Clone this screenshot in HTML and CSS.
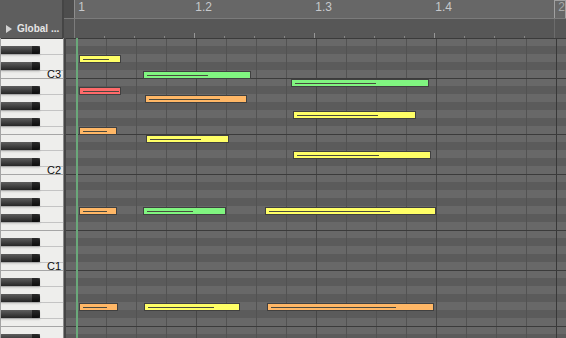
FILE: index.html
```html
<!DOCTYPE html>
<html lang="en">
<head>
    <meta charset="UTF-8">
    <meta name="viewport" content="width=device-width, initial-scale=1.0">
    <title>Piano Roll</title>
    <link rel="stylesheet" href="styles.css">
</head>
<body>
    <div class="editor">
        <div class="header">
            <div class="corner"><span class="tri"></span>Global ...</div>
            <div class="divider"></div>
            <div class="ruler">
                <div class="ruler-top">
                    <div class="pre"></div>
                    <div class="beat first">1</div>
                    <div class="beat">1.2</div>
                    <div class="beat">1.3</div>
                    <div class="beat">1.4</div>
                    <div class="bar-next">2</div>
                </div>
                <div class="ruler-bottom">
                    <div class="pre"></div>
                    <div class="ticks" id="ticks"></div>
                    <div class="bar-next-low"></div>
                </div>
            </div>
        </div>

        <div class="main">
            <div class="keyboard" id="keyboard"></div>
            <div class="divider"></div>
            <div class="roll" id="roll">
                <div class="playhead"></div>
            </div>
        </div>
    </div>

    <script src="script.js"></script>
</body>
</html>
```

FILE: styles.css
```css
* {
    margin: 0;
    padding: 0;
    box-sizing: border-box;
    font-family: 'Liberation Sans', Arial, sans-serif;
}

body {
    background: #5a5a5a;
    overflow: hidden;
}

.editor {
    width: 566px;
    height: 338px;
    display: flex;
    flex-direction: column;
    overflow: hidden;
}

/* header */
.header {
    display: flex;
    height: 38px;
    flex-shrink: 0;
}

.corner {
    width: 64px;
    background: #5e5e5e;
    color: #e6e6e6;
    font-size: 10px;
    font-weight: bold;
    line-height: 12px;
    padding: 20px 0 0 6px;
    display: flex;
    align-items: center;
    align-self: flex-start;
    height: 38px;
    white-space: nowrap;
}

.tri {
    width: 0;
    height: 0;
    border-left: 6px solid #d2d2d2;
    border-top: 4px solid transparent;
    border-bottom: 4px solid transparent;
    margin-right: 5px;
}

.divider {
    width: 2px;
    background: #454545;
    flex-shrink: 0;
}

.ruler {
    flex: 1;
    display: flex;
    flex-direction: column;
}

.ruler-top {
    height: 19px;
    display: flex;
    background: #676767;
    border-bottom: 1px solid #7b7b7b;
}

.ruler-top .pre {
    width: 10px;
    background: #4d4d4d;
}

.beat {
    width: 120px;
    flex-shrink: 0;
    font-size: 12px;
    line-height: 14px;
    color: #c6c9cc;
    padding-left: 1px;
}

.beat.first {
    border-left: 1px solid #8e8e8e;
    padding-left: 3px;
}

.bar-next {
    flex: 1;
    border: 1px solid #a0a0a0;
    border-bottom: none;
    font-size: 12px;
    line-height: 13px;
    color: #a8a8a8;
    padding-left: 3px;
}

.ruler-bottom {
    height: 19px;
    display: flex;
    background: #575757;
}

.ruler-bottom .pre {
    width: 10px;
    background: #555;
}

.ticks {
    display: flex;
    width: 480px;
    flex-shrink: 0;
}

.tick {
    width: 30px;
    height: 100%;
    background: linear-gradient(#858585, #858585) no-repeat left bottom / 1px 2px;
}

.tick.beat-tick {
    background-image: linear-gradient(#979797, #979797);
    background-size: 1px 5px;
}

.tick.bar-tick {
    background-image: linear-gradient(#7c7c7c, #7c7c7c);
    background-size: 1px 100%;
}

.bar-next-low {
    flex: 1;
    border-left: 1px solid #6c6c6c;
}

/* keyboard + grid */
.main {
    flex: 1;
    display: flex;
    overflow: hidden;
}

.keyboard {
    width: 64px;
    flex-shrink: 0;
    background: #eeeeec;
    border-left: 1px solid #a4a4a4;
    border-right: 1px solid #8a8a8a;
}

.key {
    height: 8px;
    display: flex;
    justify-content: flex-end;
}

.key.after-black {
    border-top: 1px solid #c4c4c4;
}

.key.split {
    border-top: 1px solid #a6a6a6;
}

.key.top {
    border-top: 1px solid #3c3c3c;
}

.key.black {
    justify-content: flex-start;
}

.black-key {
    width: 39px;
    height: 8px;
    display: flex;
    justify-content: flex-end;
    background: linear-gradient(#5e5e5e, #454545 45%, #262626);
    box-shadow: 0 2px 2px rgba(0, 0, 0, 0.13);
}

.black-key .tip {
    width: 8px;
    height: 8px;
    background: linear-gradient(#2a2a2a, #0c0c0c);
    border-radius: 0 3px 3px 0;
}

.key .label {
    font-size: 11px;
    line-height: 7px;
    color: #0e0e0e;
    padding-right: 2px;
}

.roll {
    flex: 1;
    position: relative;
}

.row {
    height: 8px;
    background-image:
        linear-gradient(#383838, #383838),
        linear-gradient(to right, #474747 1px, transparent 1px),
        linear-gradient(to right, #525252 1px, transparent 1px);
    background-size: 1px 100%, 120px 100%, 30px 100%;
    background-position: 490px 0, 10px 0, 10px 0;
    background-repeat: no-repeat, repeat-x, repeat-x;
}

.row.white {
    background-color: #686868;
}

.row.black {
    background-color: #5b5b5b;
}

.row.split {
    border-top: 1px solid #3b3b3b;
}

.playhead {
    position: absolute;
    left: 10px;
    top: 0;
    bottom: 0;
    width: 2px;
    background: #6aa87a;
}

.note {
    position: absolute;
    height: 8px;
    border: 1px solid #404040;
    display: flex;
    align-items: center;
    padding-left: 3px;
}

.note .len {
    height: 1px;
    background: #4a4a40;
}

.note.yellow { background: #ffff66; }
.note.green { background: #80f580; }
.note.orange { background: #ffb766; }
.note.red { background: #ff6a6a; }
```

FILE: script.js
```js
const NAMES = ['C', 'C#', 'D', 'D#', 'E', 'F', 'F#', 'G', 'G#', 'A', 'A#', 'B'];
const BLACK = [1, 3, 6, 8, 10];
const TOP_PITCH = 3 * 12 + 4; // E3 is the first visible row
const ROWS = 38;
const ROW_H = 8;
const ROLL_LEFT = 66;

// x, width, row, colour, length line
const notes = [
    [79, 42, 2, 'yellow', 26],
    [143, 108, 4, 'green', 61],
    [291, 138, 5, 'green', 81],
    [79, 42, 6, 'red', 36],
    [145, 102, 7, 'orange', 71],
    [293, 123, 9, 'yellow', 81],
    [79, 38, 11, 'orange', 24],
    [146, 83, 12, 'yellow', 51],
    [293, 138, 14, 'yellow', 82],
    [79, 38, 21, 'orange', 24],
    [143, 83, 21, 'green', 46],
    [265, 171, 21, 'yellow', 121],
    [79, 39, 33, 'orange', 24],
    [144, 96, 33, 'yellow', 66],
    [267, 167, 33, 'orange', 125]
];

const keyboard = document.getElementById('keyboard');
const roll = document.getElementById('roll');
const ticks = document.getElementById('ticks');

for (let i = 0; i < ROWS; i++) {
    const pitch = TOP_PITCH - i;
    const pc = ((pitch % 12) + 12) % 12;
    const octave = Math.floor(pitch / 12);
    const isBlack = BLACK.includes(pc);
    const split = pc === 4 || pc === 11;
    const afterBlack = BLACK.includes((pc + 1) % 12);

    const key = document.createElement('div');
    key.className = 'key';
    if (isBlack) {
        key.classList.add('black');
        key.innerHTML = '<div class="black-key"><div class="tip"></div></div>';
    } else if (pc === 0) {
        key.innerHTML = `<span class="label">C${octave}</span>`;
    }
    if (i === 0) key.classList.add('top');
    else if (split) key.classList.add('split');
    else if (afterBlack) key.classList.add('after-black');
    keyboard.appendChild(key);

    const row = document.createElement('div');
    row.className = 'row ' + (isBlack ? 'black' : 'white');
    if (split) row.classList.add('split');
    roll.appendChild(row);
}

for (let i = 0; i < 16; i++) {
    const tick = document.createElement('div');
    tick.className = 'tick';
    if (i === 0) tick.classList.add('bar-tick');
    else if (i % 4 === 0) tick.classList.add('beat-tick');
    ticks.appendChild(tick);
}

notes.forEach(([x, w, r, colour, len]) => {
    const note = document.createElement('div');
    note.className = 'note ' + colour;
    note.style.left = (x - ROLL_LEFT) + 'px';
    note.style.top = (r * ROW_H + 1) + 'px';
    note.style.width = w + 'px';
    note.innerHTML = `<div class="len" style="width:${len}px"></div>`;
    roll.appendChild(note);
});
```
